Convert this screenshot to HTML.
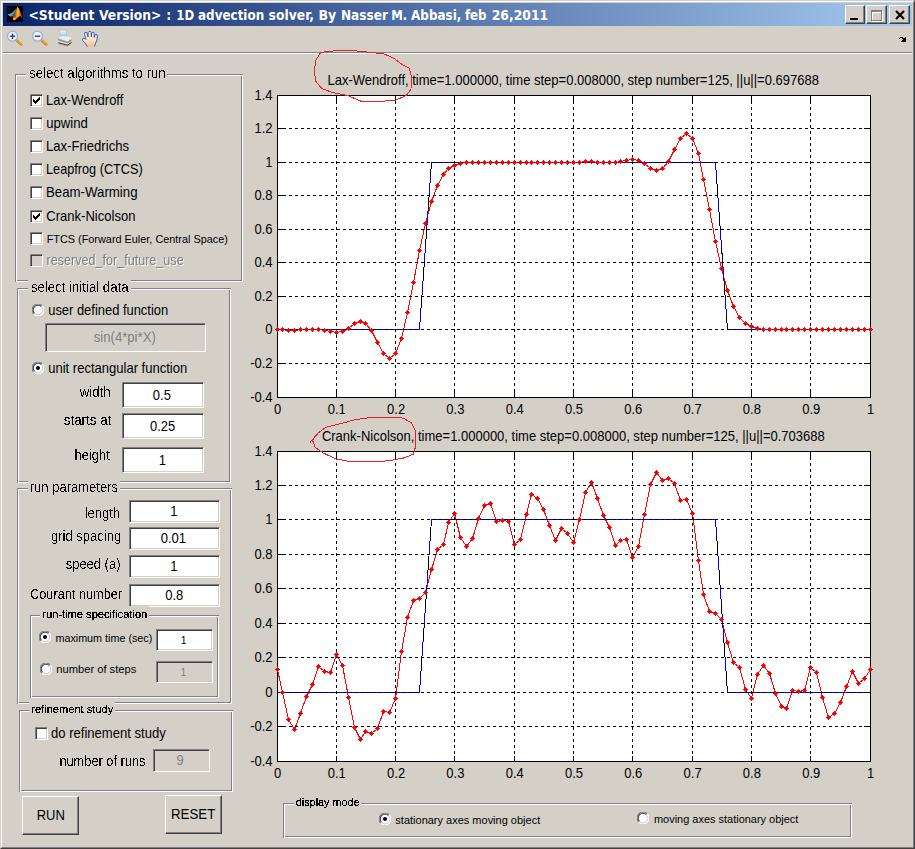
<!DOCTYPE html>
<html><head><meta charset="utf-8"><title>1D advection solver</title>
<style>
html,body{margin:0;padding:0}
body{width:915px;height:849px;background:#d4d0c8;position:relative;overflow:hidden;font-family:'Liberation Sans', sans-serif;}
.a{position:absolute}
.t{position:absolute;white-space:pre;line-height:1;}
.pn{position:absolute;box-sizing:border-box;border:1px solid #808080;border-right:none;border-bottom:none;box-shadow:inset 1px 1px 0 #fff, inset -1px -1px 0 #fff, inset -2px -2px 0 #808080}
.cb{position:absolute;width:13px;height:13px;box-sizing:border-box;background:#fff;border:1px solid;border-color:#808080 #fff #fff #808080;box-shadow:inset 1px 1px 0 #404040, inset -1px -1px 0 #d4d0c8}
.cb.dis{background:#d4d0c8}
.cb svg{position:absolute;left:1px;top:1px}
.ed{position:absolute;box-sizing:border-box;background:#fff;border:1px solid;border-color:#808080 #fff #fff #808080;box-shadow:inset 1px 1px 0 #404040, inset -1px -1px 0 #d4d0c8}
.ed.dis{background:#d4d0c8}
.bt{position:absolute;box-sizing:border-box;background:#d4d0c8;border:1px solid;border-color:#fff #404040 #404040 #fff;box-shadow:inset -1px -1px 0 #808080}
.cbtn{position:absolute;box-sizing:border-box;background:#d4d0c8;border:1px solid;border-color:#fff #404040 #404040 #fff;box-shadow:inset -1px -1px 0 #808080, inset 1px 1px 0 #d4d0c8}
svg .g{stroke:#000;stroke-width:1;stroke-dasharray:3 3}
svg .k{stroke:#000;stroke-width:1}
</style></head>
<body>

<div class="a" style="left:0;top:0;width:915px;height:849px;box-sizing:border-box;border:1px solid;border-color:#d4d0c8 #404040 #404040 #d4d0c8"></div>
<div class="a" style="left:1px;top:1px;width:913px;height:847px;box-sizing:border-box;border:1px solid;border-color:#fff #808080 #808080 #fff"></div>
<div class="a" style="left:3px;top:3px;width:909px;height:23px;background:linear-gradient(90deg,#0a246a 0%,#a6caf0 100%)"></div>
<!-- matlab icon -->
<svg class="a" style="left:7px;top:6px" width="16" height="16" viewBox="0 0 16 16">
<defs>
<linearGradient id="mb" x1="0" y1="0" x2="1" y2="0"><stop offset="0" stop-color="#6a1c08"/><stop offset="0.3" stop-color="#c8501a"/><stop offset="0.5" stop-color="#f9a824"/><stop offset="0.58" stop-color="#ffc62a"/><stop offset="0.75" stop-color="#ea6a1e"/><stop offset="1" stop-color="#a03c18"/></linearGradient>
<linearGradient id="mc" x1="0" y1="0" x2="1" y2="0"><stop offset="0" stop-color="#4cc0e6"/><stop offset="0.6" stop-color="#3aa2c8"/><stop offset="1" stop-color="#1c6e8c"/></linearGradient>
</defs>
<rect width="16" height="16" fill="#000"/>
<path d="M0.5 8.4 L4.8 7.0 L8.3 3.2 L9.8 1.2 L9 5 L7.5 7.5 L5.6 9.8 L3.5 10.8 Z" fill="url(#mc)"/>
<path d="M10.4 0.7 L12 2.8 L13.9 7.5 L15.3 12.2 L13.4 10.2 L11.8 10.4 L9 13.3 L7 14.3 L6 13.4 L5.2 10.6 L7.5 7.5 L9 5 Z" fill="url(#mb)"/>
<path d="M6 12 L8.2 11.5 L9 13.3 L7 14.3 L6 13.4 Z" fill="#ffd030" opacity="0.85"/>
</svg>
<!-- caption buttons -->
<div class="cbtn" style="left:845px;top:5px;width:20px;height:19px"><div class="a" style="left:4px;top:12px;width:8px;height:2px;background:#000"></div></div>
<div class="cbtn" style="left:866px;top:5px;width:21px;height:19px"><div class="a" style="left:5px;top:5px;width:11px;height:11px;box-sizing:border-box;border:1px solid #fff;border-top-width:2px"></div><div class="a" style="left:4px;top:4px;width:11px;height:11px;box-sizing:border-box;border:1px solid #808080;border-top-width:2px"></div></div>
<div class="cbtn" style="left:889px;top:5px;width:21px;height:19px"><svg class="a" style="left:5px;top:4px" width="10" height="10" viewBox="0 0 10 10"><path d="M1 1 L9 9 M9 1 L1 9" stroke="#000" stroke-width="2.1" fill="none"/></svg></div>
<!-- toolbar separator -->
<div class="a" style="left:3px;top:52px;width:909px;height:1px;background:#808080"></div>
<div class="a" style="left:3px;top:53px;width:909px;height:1px;background:#fff"></div>
<!-- toolbar icons -->
<svg class="a" style="left:5px;top:28px" width="100" height="22" viewBox="5 28 100 22">
<defs><linearGradient id="sk" x1="0" y1="0" x2="0" y2="1"><stop offset="0" stop-color="#fff4e4"/><stop offset="0.6" stop-color="#fde0c2"/><stop offset="1" stop-color="#f2be8c"/></linearGradient>
<linearGradient id="pp" x1="0" y1="0" x2="0" y2="1"><stop offset="0" stop-color="#f4faff"/><stop offset="1" stop-color="#9cc8f4"/></linearGradient>
<radialGradient id="ln" cx="0.4" cy="0.4" r="0.7"><stop offset="0" stop-color="#fff"/><stop offset="1" stop-color="#cfe8f8"/></radialGradient></defs>
<g><path d="M16.6 40.2 L21.6 44.6" stroke="#e8a030" stroke-width="2.6" stroke-linecap="round"/><path d="M16.4 41.4 L20.8 45.4" stroke="#b07010" stroke-width="0.7"/>
<circle cx="12.5" cy="36.2" r="5" fill="url(#ln)" stroke="#a4acdf" stroke-width="1.3"/>
<path d="M9.8 36.2 H15.2 M12.5 33.5 V38.9" stroke="#1c2a80" stroke-width="1.3"/></g>
<g><path d="M41.6 40.2 L46.6 44.6" stroke="#e8a030" stroke-width="2.6" stroke-linecap="round"/><path d="M41.4 41.4 L45.8 45.4" stroke="#b07010" stroke-width="0.7"/>
<circle cx="37.5" cy="36.2" r="5" fill="url(#ln)" stroke="#a4acdf" stroke-width="1.3"/>
<path d="M34.8 36.2 H40.2" stroke="#1c2a80" stroke-width="1.3"/></g>
<!-- printer -->
<g><path d="M59.5 30.2 L65.7 30.2 L66.9 35.6 L60.9 36.3 Z" fill="url(#pp)" stroke="#9ab8dc" stroke-width="0.5"/>
<path d="M58.1 37.9 L61.1 35.9 L69.8 36.4 L71.6 38.9 L71.6 42 L67.4 45 L58.1 42.6 Z" fill="#b8b8b8"/>
<path d="M58.1 37.9 L61.1 35.9 L69.8 36.4 L71.6 38.9 L67.6 41.6 Z" fill="#ececec"/>
<path d="M58.1 39.6 L67.6 42.6 L71.6 40.2" fill="none" stroke="#7a7a7a" stroke-width="0.8"/>
<path d="M58.1 41.3 L67.6 44 L71.6 41.6" fill="none" stroke="#f4f4f4" stroke-width="0.8"/>
<path d="M58.3 42.8 L67.4 45.2 L71.6 42.4" fill="none" stroke="#3c3c3c" stroke-width="1.1"/><path d="M59 44 L67.4 46 L71 43.8" fill="none" stroke="#8c8c8c" stroke-width="0.7" opacity="0.7"/>
<rect x="69" y="39.6" width="1" height="1.2" fill="#38b848"/></g>
<!-- hand -->
<g transform="translate(82,31)"><path d="M5.5 15.5 L2.5 11.5 L0.5 9.5 L0.5 8 L1.5 7 L3 7.5 L4 8.5 L2.5 3.5 L2.8 1.8 L4 1.2 L5 2 L6 6 L6.2 1.5 L7 0.5 L8.5 0.5 L9 1.5 L9.3 6 L9.8 2 L10.5 1.2 L11.8 1.5 L12.2 2.5 L12.3 6.5 L13 4 L13.8 3.3 L15 3.8 L15.3 5 L15 9 L13.5 12.5 L12.5 15.5 Z" fill="url(#sk)"/><path d="M5.5 15.5 L2.5 11.5 L0.5 9.5 L0.5 8 L1.5 7 L3 7.5 L4 8.5 L2.5 3.5 L2.8 1.8 L4 1.2 L5 2 L6 6 L6.2 1.5 L7 0.5 L8.5 0.5 L9 1.5 L9.3 6 L9.8 2 L10.5 1.2 L11.8 1.5 L12.2 2.5 L12.3 6.5 L13 4 L13.8 3.3 L15 3.8 L15.3 5 L15 9 L13.5 12.5 L12.5 15.5" fill="none" stroke="#2a4cc4" stroke-width="0.9" stroke-linejoin="round"/></g>
</svg>
<svg class="a" style="left:899px;top:37px" width="7" height="5" viewBox="0 0 7 5" shape-rendering="crispEdges"><path d="M1 0h3v1h-3zM6 0h1v1h-1zM0 1h1v1h-1zM3 1h4v1h-4zM4 2h3v1h-3zM3 3h4v1h-4zM2 4h5v1h-5z" fill="#000"/></svg>

<div class="pn" style="left:15px;top:74px;width:228px;height:208px"></div><div class="pn" style="left:17px;top:288px;width:214px;height:195px"></div><div class="pn" style="left:17px;top:488px;width:215px;height:216px"></div><div class="pn" style="left:30px;top:615px;width:189px;height:83px"></div><div class="pn" style="left:19px;top:710px;width:214px;height:82px"></div><div class="pn" style="left:283px;top:803px;width:569px;height:35px"></div><div class="cb" style="left:30px;top:94px"><svg width="9" height="9" viewBox="0 0 9 9" shape-rendering="crispEdges"><path d="M1 3v3l2 2 5-5V0L3 5z" fill="#000"/></svg></div><div class="cb" style="left:30px;top:117px"></div><div class="cb" style="left:30px;top:140px"></div><div class="cb" style="left:30px;top:163px"></div><div class="cb" style="left:30px;top:186px"></div><div class="cb" style="left:30px;top:210px"><svg width="9" height="9" viewBox="0 0 9 9" shape-rendering="crispEdges"><path d="M1 3v3l2 2 5-5V0L3 5z" fill="#000"/></svg></div><div class="cb" style="left:30px;top:232px"></div><div class="cb dis" style="left:30px;top:254px"></div><svg class="a" style="left:32px;top:304px" width="12" height="12" viewBox="0 0 12 12"><circle cx="6" cy="6" r="5.5" fill="#fff"/><path d="M10.2 1.8A5.9 5.9 0 0 0 1.8 10.2" fill="none" stroke="#808080" stroke-width="1.1"/><path d="M9.4 2.6A4.8 4.8 0 0 0 2.6 9.4" fill="none" stroke="#404040" stroke-width="1.1"/><path d="M1.8 10.2A5.9 5.9 0 0 0 10.2 1.8" fill="none" stroke="#fff" stroke-width="1.1"/><path d="M2.6 9.4A4.8 4.8 0 0 0 9.4 2.6" fill="none" stroke="#d4d0c8" stroke-width="1.1"/></svg><svg class="a" style="left:32px;top:362px" width="12" height="12" viewBox="0 0 12 12"><circle cx="6" cy="6" r="5.5" fill="#fff"/><path d="M10.2 1.8A5.9 5.9 0 0 0 1.8 10.2" fill="none" stroke="#808080" stroke-width="1.1"/><path d="M9.4 2.6A4.8 4.8 0 0 0 2.6 9.4" fill="none" stroke="#404040" stroke-width="1.1"/><path d="M1.8 10.2A5.9 5.9 0 0 0 10.2 1.8" fill="none" stroke="#fff" stroke-width="1.1"/><path d="M2.6 9.4A4.8 4.8 0 0 0 9.4 2.6" fill="none" stroke="#d4d0c8" stroke-width="1.1"/><circle cx="6" cy="6" r="2" fill="#000"/></svg><svg class="a" style="left:39px;top:631px" width="12" height="12" viewBox="0 0 12 12"><circle cx="6" cy="6" r="5.5" fill="#fff"/><path d="M10.2 1.8A5.9 5.9 0 0 0 1.8 10.2" fill="none" stroke="#808080" stroke-width="1.1"/><path d="M9.4 2.6A4.8 4.8 0 0 0 2.6 9.4" fill="none" stroke="#404040" stroke-width="1.1"/><path d="M1.8 10.2A5.9 5.9 0 0 0 10.2 1.8" fill="none" stroke="#fff" stroke-width="1.1"/><path d="M2.6 9.4A4.8 4.8 0 0 0 9.4 2.6" fill="none" stroke="#d4d0c8" stroke-width="1.1"/><circle cx="6" cy="6" r="2" fill="#000"/></svg><svg class="a" style="left:40px;top:663px" width="12" height="12" viewBox="0 0 12 12"><circle cx="6" cy="6" r="5.5" fill="#fff"/><path d="M10.2 1.8A5.9 5.9 0 0 0 1.8 10.2" fill="none" stroke="#808080" stroke-width="1.1"/><path d="M9.4 2.6A4.8 4.8 0 0 0 2.6 9.4" fill="none" stroke="#404040" stroke-width="1.1"/><path d="M1.8 10.2A5.9 5.9 0 0 0 10.2 1.8" fill="none" stroke="#fff" stroke-width="1.1"/><path d="M2.6 9.4A4.8 4.8 0 0 0 9.4 2.6" fill="none" stroke="#d4d0c8" stroke-width="1.1"/></svg><svg class="a" style="left:379px;top:813px" width="12" height="12" viewBox="0 0 12 12"><circle cx="6" cy="6" r="5.5" fill="#fff"/><path d="M10.2 1.8A5.9 5.9 0 0 0 1.8 10.2" fill="none" stroke="#808080" stroke-width="1.1"/><path d="M9.4 2.6A4.8 4.8 0 0 0 2.6 9.4" fill="none" stroke="#404040" stroke-width="1.1"/><path d="M1.8 10.2A5.9 5.9 0 0 0 10.2 1.8" fill="none" stroke="#fff" stroke-width="1.1"/><path d="M2.6 9.4A4.8 4.8 0 0 0 9.4 2.6" fill="none" stroke="#d4d0c8" stroke-width="1.1"/><circle cx="6" cy="6" r="2" fill="#000"/></svg><svg class="a" style="left:637px;top:812px" width="12" height="12" viewBox="0 0 12 12"><circle cx="6" cy="6" r="5.5" fill="#fff"/><path d="M10.2 1.8A5.9 5.9 0 0 0 1.8 10.2" fill="none" stroke="#808080" stroke-width="1.1"/><path d="M9.4 2.6A4.8 4.8 0 0 0 2.6 9.4" fill="none" stroke="#404040" stroke-width="1.1"/><path d="M1.8 10.2A5.9 5.9 0 0 0 10.2 1.8" fill="none" stroke="#fff" stroke-width="1.1"/><path d="M2.6 9.4A4.8 4.8 0 0 0 9.4 2.6" fill="none" stroke="#d4d0c8" stroke-width="1.1"/></svg><div class="ed dis" style="left:45px;top:323px;width:161px;height:29px"></div><div class="ed" style="left:122px;top:382px;width:82px;height:26px"></div><div class="ed" style="left:122px;top:413px;width:82px;height:26px"></div><div class="ed" style="left:122px;top:447px;width:82px;height:26px"></div><div class="ed" style="left:129px;top:500px;width:91px;height:23px"></div><div class="ed" style="left:129px;top:527px;width:91px;height:23px"></div><div class="ed" style="left:129px;top:555px;width:91px;height:23px"></div><div class="ed" style="left:129px;top:584px;width:91px;height:23px"></div><div class="ed" style="left:156px;top:629px;width:57px;height:22px"></div><div class="ed dis" style="left:156px;top:661px;width:57px;height:22px"></div><div class="ed dis" style="left:153px;top:749px;width:57px;height:23px"></div><div class="cb" style="left:35px;top:727px"></div><div class="bt" style="left:22px;top:796px;width:57px;height:39px"></div><div class="bt" style="left:165px;top:795px;width:57px;height:39px"></div>
<svg class="a" style="left:0;top:0" width="915" height="849" viewBox="0 0 915 849" font-family="'Liberation Sans', sans-serif" font-size="13.9" fill="#000">
<g shape-rendering="crispEdges">
<rect x="277" y="95" width="594" height="303" fill="#fff"/>
<polyline points="277.5,329.5 282.5,329.5 288.5,330.5 294.5,330.5 300.5,329.5 306.5,329.5 312.5,329.5 318.5,329.5 324.5,330.5 330.5,331.5 336.5,332.5 342.5,331.5 348.5,328.5 354.5,323.5 360.5,321.5 365.5,323.5 371.5,330.5 377.5,342.5 383.5,353.5 389.5,358.5 395.5,353.5 401.5,338.5 407.5,312.5 413.5,282.5 419.5,250.5 425.5,223.5 431.5,201.5 437.5,185.5 443.5,174.5 448.5,168.5 454.5,165.5 460.5,163.5 466.5,162.5 472.5,162.5 478.5,162.5 484.5,162.5 490.5,162.5 496.5,162.5 502.5,162.5 508.5,162.5 514.5,162.5 520.5,162.5 526.5,162.5 531.5,162.5 537.5,162.5 543.5,162.5 549.5,162.5 555.5,162.5 561.5,162.5 567.5,162.5 573.5,162.5 579.5,162.5 585.5,161.5 591.5,161.5 597.5,162.5 603.5,162.5 609.5,162.5 615.5,162.5 620.5,161.5 626.5,160.5 632.5,159.5 638.5,160.5 644.5,163.5 650.5,168.5 656.5,170.5 662.5,168.5 668.5,161.5 674.5,149.5 680.5,138.5 686.5,133.5 692.5,138.5 698.5,153.5 703.5,179.5 709.5,209.5 715.5,241.5 721.5,268.5 727.5,290.5 733.5,306.5 739.5,317.5 745.5,323.5 751.5,326.5 757.5,328.5 763.5,329.5 769.5,329.5 775.5,329.5 781.5,329.5 786.5,329.5 792.5,329.5 798.5,329.5 804.5,329.5 810.5,329.5 816.5,329.5 822.5,329.5 828.5,329.5 834.5,329.5 840.5,329.5 846.5,329.5 852.5,329.5 858.5,329.5 864.5,329.5 870.5,329.5" fill="none" stroke="#ff0000" stroke-width="1"/>
<polyline points="277.5,329.5 419.5,329.5 425.5,246.5 431.5,162.5 715.5,162.5 721.5,246.5 727.5,329.5 870.5,329.5" fill="none" stroke="#0000ff" stroke-width="1"/>
<polyline points="419.5,329.5 425.5,246.5 431.5,162.5" fill="none" stroke="#000" stroke-width="1" stroke-dasharray="17 17" stroke-dashoffset="-17"/>
<polyline points="715.5,162.5 721.5,246.5 727.5,329.5" fill="none" stroke="#000" stroke-width="1" stroke-dasharray="17 17" stroke-dashoffset="-17"/>
<line x1="336.5" y1="95" x2="336.5" y2="397" class="g"/>
<line x1="336.5" y1="95" x2="336.5" y2="101" class="k"/><line x1="336.5" y1="392" x2="336.5" y2="398" class="k"/>
<line x1="395.5" y1="95" x2="395.5" y2="397" class="g"/>
<line x1="395.5" y1="95" x2="395.5" y2="101" class="k"/><line x1="395.5" y1="392" x2="395.5" y2="398" class="k"/>
<line x1="454.5" y1="95" x2="454.5" y2="397" class="g"/>
<line x1="454.5" y1="95" x2="454.5" y2="101" class="k"/><line x1="454.5" y1="392" x2="454.5" y2="398" class="k"/>
<line x1="514.5" y1="95" x2="514.5" y2="397" class="g"/>
<line x1="514.5" y1="95" x2="514.5" y2="101" class="k"/><line x1="514.5" y1="392" x2="514.5" y2="398" class="k"/>
<line x1="573.5" y1="95" x2="573.5" y2="397" class="g"/>
<line x1="573.5" y1="95" x2="573.5" y2="101" class="k"/><line x1="573.5" y1="392" x2="573.5" y2="398" class="k"/>
<line x1="632.5" y1="95" x2="632.5" y2="397" class="g"/>
<line x1="632.5" y1="95" x2="632.5" y2="101" class="k"/><line x1="632.5" y1="392" x2="632.5" y2="398" class="k"/>
<line x1="692.5" y1="95" x2="692.5" y2="397" class="g"/>
<line x1="692.5" y1="95" x2="692.5" y2="101" class="k"/><line x1="692.5" y1="392" x2="692.5" y2="398" class="k"/>
<line x1="751.5" y1="95" x2="751.5" y2="397" class="g"/>
<line x1="751.5" y1="95" x2="751.5" y2="101" class="k"/><line x1="751.5" y1="392" x2="751.5" y2="398" class="k"/>
<line x1="810.5" y1="95" x2="810.5" y2="397" class="g"/>
<line x1="810.5" y1="95" x2="810.5" y2="101" class="k"/><line x1="810.5" y1="392" x2="810.5" y2="398" class="k"/>
<line x1="277" y1="363.5" x2="870" y2="363.5" class="g"/>
<line x1="277" y1="363.5" x2="284" y2="363.5" class="k"/><line x1="864" y1="363.5" x2="871" y2="363.5" class="k"/>
<line x1="277" y1="329.5" x2="870" y2="329.5" class="g"/>
<line x1="277" y1="329.5" x2="284" y2="329.5" class="k"/><line x1="864" y1="329.5" x2="871" y2="329.5" class="k"/>
<line x1="277" y1="296.5" x2="870" y2="296.5" class="g"/>
<line x1="277" y1="296.5" x2="284" y2="296.5" class="k"/><line x1="864" y1="296.5" x2="871" y2="296.5" class="k"/>
<line x1="277" y1="262.5" x2="870" y2="262.5" class="g"/>
<line x1="277" y1="262.5" x2="284" y2="262.5" class="k"/><line x1="864" y1="262.5" x2="871" y2="262.5" class="k"/>
<line x1="277" y1="229.5" x2="870" y2="229.5" class="g"/>
<line x1="277" y1="229.5" x2="284" y2="229.5" class="k"/><line x1="864" y1="229.5" x2="871" y2="229.5" class="k"/>
<line x1="277" y1="195.5" x2="870" y2="195.5" class="g"/>
<line x1="277" y1="195.5" x2="284" y2="195.5" class="k"/><line x1="864" y1="195.5" x2="871" y2="195.5" class="k"/>
<line x1="277" y1="162.5" x2="870" y2="162.5" class="g"/>
<line x1="277" y1="162.5" x2="284" y2="162.5" class="k"/><line x1="864" y1="162.5" x2="871" y2="162.5" class="k"/>
<line x1="277" y1="128.5" x2="870" y2="128.5" class="g"/>
<line x1="277" y1="128.5" x2="284" y2="128.5" class="k"/><line x1="864" y1="128.5" x2="871" y2="128.5" class="k"/>
<rect x="277.5" y="95.5" width="593" height="302" fill="none" class="k"/>
<path d="M275 329h5v1h-5zM276 328h3v3h-3zM277 327h1v5h-1zM280 329h5v1h-5zM281 328h3v3h-3zM282 327h1v5h-1zM286 330h5v1h-5zM287 329h3v3h-3zM288 328h1v5h-1zM292 330h5v1h-5zM293 329h3v3h-3zM294 328h1v5h-1zM298 329h5v1h-5zM299 328h3v3h-3zM300 327h1v5h-1zM304 329h5v1h-5zM305 328h3v3h-3zM306 327h1v5h-1zM310 329h5v1h-5zM311 328h3v3h-3zM312 327h1v5h-1zM316 329h5v1h-5zM317 328h3v3h-3zM318 327h1v5h-1zM322 330h5v1h-5zM323 329h3v3h-3zM324 328h1v5h-1zM328 331h5v1h-5zM329 330h3v3h-3zM330 329h1v5h-1zM334 332h5v1h-5zM335 331h3v3h-3zM336 330h1v5h-1zM340 331h5v1h-5zM341 330h3v3h-3zM342 329h1v5h-1zM346 328h5v1h-5zM347 327h3v3h-3zM348 326h1v5h-1zM352 323h5v1h-5zM353 322h3v3h-3zM354 321h1v5h-1zM358 321h5v1h-5zM359 320h3v3h-3zM360 319h1v5h-1zM363 323h5v1h-5zM364 322h3v3h-3zM365 321h1v5h-1zM369 330h5v1h-5zM370 329h3v3h-3zM371 328h1v5h-1zM375 342h5v1h-5zM376 341h3v3h-3zM377 340h1v5h-1zM381 353h5v1h-5zM382 352h3v3h-3zM383 351h1v5h-1zM387 358h5v1h-5zM388 357h3v3h-3zM389 356h1v5h-1zM393 353h5v1h-5zM394 352h3v3h-3zM395 351h1v5h-1zM399 338h5v1h-5zM400 337h3v3h-3zM401 336h1v5h-1zM405 312h5v1h-5zM406 311h3v3h-3zM407 310h1v5h-1zM411 282h5v1h-5zM412 281h3v3h-3zM413 280h1v5h-1zM417 250h5v1h-5zM418 249h3v3h-3zM419 248h1v5h-1zM423 223h5v1h-5zM424 222h3v3h-3zM425 221h1v5h-1zM429 201h5v1h-5zM430 200h3v3h-3zM431 199h1v5h-1zM435 185h5v1h-5zM436 184h3v3h-3zM437 183h1v5h-1zM441 174h5v1h-5zM442 173h3v3h-3zM443 172h1v5h-1zM446 168h5v1h-5zM447 167h3v3h-3zM448 166h1v5h-1zM452 165h5v1h-5zM453 164h3v3h-3zM454 163h1v5h-1zM458 163h5v1h-5zM459 162h3v3h-3zM460 161h1v5h-1zM464 162h5v1h-5zM465 161h3v3h-3zM466 160h1v5h-1zM470 162h5v1h-5zM471 161h3v3h-3zM472 160h1v5h-1zM476 162h5v1h-5zM477 161h3v3h-3zM478 160h1v5h-1zM482 162h5v1h-5zM483 161h3v3h-3zM484 160h1v5h-1zM488 162h5v1h-5zM489 161h3v3h-3zM490 160h1v5h-1zM494 162h5v1h-5zM495 161h3v3h-3zM496 160h1v5h-1zM500 162h5v1h-5zM501 161h3v3h-3zM502 160h1v5h-1zM506 162h5v1h-5zM507 161h3v3h-3zM508 160h1v5h-1zM512 162h5v1h-5zM513 161h3v3h-3zM514 160h1v5h-1zM518 162h5v1h-5zM519 161h3v3h-3zM520 160h1v5h-1zM524 162h5v1h-5zM525 161h3v3h-3zM526 160h1v5h-1zM529 162h5v1h-5zM530 161h3v3h-3zM531 160h1v5h-1zM535 162h5v1h-5zM536 161h3v3h-3zM537 160h1v5h-1zM541 162h5v1h-5zM542 161h3v3h-3zM543 160h1v5h-1zM547 162h5v1h-5zM548 161h3v3h-3zM549 160h1v5h-1zM553 162h5v1h-5zM554 161h3v3h-3zM555 160h1v5h-1zM559 162h5v1h-5zM560 161h3v3h-3zM561 160h1v5h-1zM565 162h5v1h-5zM566 161h3v3h-3zM567 160h1v5h-1zM571 162h5v1h-5zM572 161h3v3h-3zM573 160h1v5h-1zM577 162h5v1h-5zM578 161h3v3h-3zM579 160h1v5h-1zM583 161h5v1h-5zM584 160h3v3h-3zM585 159h1v5h-1zM589 161h5v1h-5zM590 160h3v3h-3zM591 159h1v5h-1zM595 162h5v1h-5zM596 161h3v3h-3zM597 160h1v5h-1zM601 162h5v1h-5zM602 161h3v3h-3zM603 160h1v5h-1zM607 162h5v1h-5zM608 161h3v3h-3zM609 160h1v5h-1zM613 162h5v1h-5zM614 161h3v3h-3zM615 160h1v5h-1zM618 161h5v1h-5zM619 160h3v3h-3zM620 159h1v5h-1zM624 160h5v1h-5zM625 159h3v3h-3zM626 158h1v5h-1zM630 159h5v1h-5zM631 158h3v3h-3zM632 157h1v5h-1zM636 160h5v1h-5zM637 159h3v3h-3zM638 158h1v5h-1zM642 163h5v1h-5zM643 162h3v3h-3zM644 161h1v5h-1zM648 168h5v1h-5zM649 167h3v3h-3zM650 166h1v5h-1zM654 170h5v1h-5zM655 169h3v3h-3zM656 168h1v5h-1zM660 168h5v1h-5zM661 167h3v3h-3zM662 166h1v5h-1zM666 161h5v1h-5zM667 160h3v3h-3zM668 159h1v5h-1zM672 149h5v1h-5zM673 148h3v3h-3zM674 147h1v5h-1zM678 138h5v1h-5zM679 137h3v3h-3zM680 136h1v5h-1zM684 133h5v1h-5zM685 132h3v3h-3zM686 131h1v5h-1zM690 138h5v1h-5zM691 137h3v3h-3zM692 136h1v5h-1zM696 153h5v1h-5zM697 152h3v3h-3zM698 151h1v5h-1zM701 179h5v1h-5zM702 178h3v3h-3zM703 177h1v5h-1zM707 209h5v1h-5zM708 208h3v3h-3zM709 207h1v5h-1zM713 241h5v1h-5zM714 240h3v3h-3zM715 239h1v5h-1zM719 268h5v1h-5zM720 267h3v3h-3zM721 266h1v5h-1zM725 290h5v1h-5zM726 289h3v3h-3zM727 288h1v5h-1zM731 306h5v1h-5zM732 305h3v3h-3zM733 304h1v5h-1zM737 317h5v1h-5zM738 316h3v3h-3zM739 315h1v5h-1zM743 323h5v1h-5zM744 322h3v3h-3zM745 321h1v5h-1zM749 326h5v1h-5zM750 325h3v3h-3zM751 324h1v5h-1zM755 328h5v1h-5zM756 327h3v3h-3zM757 326h1v5h-1zM761 329h5v1h-5zM762 328h3v3h-3zM763 327h1v5h-1zM767 329h5v1h-5zM768 328h3v3h-3zM769 327h1v5h-1zM773 329h5v1h-5zM774 328h3v3h-3zM775 327h1v5h-1zM779 329h5v1h-5zM780 328h3v3h-3zM781 327h1v5h-1zM784 329h5v1h-5zM785 328h3v3h-3zM786 327h1v5h-1zM790 329h5v1h-5zM791 328h3v3h-3zM792 327h1v5h-1zM796 329h5v1h-5zM797 328h3v3h-3zM798 327h1v5h-1zM802 329h5v1h-5zM803 328h3v3h-3zM804 327h1v5h-1zM808 329h5v1h-5zM809 328h3v3h-3zM810 327h1v5h-1zM814 329h5v1h-5zM815 328h3v3h-3zM816 327h1v5h-1zM820 329h5v1h-5zM821 328h3v3h-3zM822 327h1v5h-1zM826 329h5v1h-5zM827 328h3v3h-3zM828 327h1v5h-1zM832 329h5v1h-5zM833 328h3v3h-3zM834 327h1v5h-1zM838 329h5v1h-5zM839 328h3v3h-3zM840 327h1v5h-1zM844 329h5v1h-5zM845 328h3v3h-3zM846 327h1v5h-1zM850 329h5v1h-5zM851 328h3v3h-3zM852 327h1v5h-1zM856 329h5v1h-5zM857 328h3v3h-3zM858 327h1v5h-1zM862 329h5v1h-5zM863 328h3v3h-3zM864 327h1v5h-1zM868 329h5v1h-5zM869 328h3v3h-3zM870 327h1v5h-1z" fill="#ff0000"/>
<text x="277.5" y="414" text-anchor="middle" textLength="7.23" lengthAdjust="spacingAndGlyphs">0</text>
<text x="336.8" y="414" text-anchor="middle" textLength="18.07" lengthAdjust="spacingAndGlyphs">0.1</text>
<text x="396.1" y="414" text-anchor="middle" textLength="18.07" lengthAdjust="spacingAndGlyphs">0.2</text>
<text x="455.4" y="414" text-anchor="middle" textLength="18.07" lengthAdjust="spacingAndGlyphs">0.3</text>
<text x="514.7" y="414" text-anchor="middle" textLength="18.07" lengthAdjust="spacingAndGlyphs">0.4</text>
<text x="574.0" y="414" text-anchor="middle" textLength="18.07" lengthAdjust="spacingAndGlyphs">0.5</text>
<text x="633.3" y="414" text-anchor="middle" textLength="18.07" lengthAdjust="spacingAndGlyphs">0.6</text>
<text x="692.6" y="414" text-anchor="middle" textLength="18.07" lengthAdjust="spacingAndGlyphs">0.7</text>
<text x="751.9" y="414" text-anchor="middle" textLength="18.07" lengthAdjust="spacingAndGlyphs">0.8</text>
<text x="811.2" y="414" text-anchor="middle" textLength="18.07" lengthAdjust="spacingAndGlyphs">0.9</text>
<text x="870.5" y="414" text-anchor="middle" textLength="7.23" lengthAdjust="spacingAndGlyphs">1</text>
<text x="272.6" y="402" text-anchor="end" textLength="22.39" lengthAdjust="spacingAndGlyphs">-0.4</text>
<text x="272.6" y="368" text-anchor="end" textLength="22.39" lengthAdjust="spacingAndGlyphs">-0.2</text>
<text x="272.6" y="334" text-anchor="end" textLength="7.23" lengthAdjust="spacingAndGlyphs">0</text>
<text x="272.6" y="301" text-anchor="end" textLength="18.07" lengthAdjust="spacingAndGlyphs">0.2</text>
<text x="272.6" y="267" text-anchor="end" textLength="18.07" lengthAdjust="spacingAndGlyphs">0.4</text>
<text x="272.6" y="234" text-anchor="end" textLength="18.07" lengthAdjust="spacingAndGlyphs">0.6</text>
<text x="272.6" y="200" text-anchor="end" textLength="18.07" lengthAdjust="spacingAndGlyphs">0.8</text>
<text x="272.6" y="167" text-anchor="end" textLength="7.23" lengthAdjust="spacingAndGlyphs">1</text>
<text x="272.6" y="133" text-anchor="end" textLength="18.07" lengthAdjust="spacingAndGlyphs">1.2</text>
<text x="272.6" y="100" text-anchor="end" textLength="18.07" lengthAdjust="spacingAndGlyphs">1.4</text>
<rect x="277" y="451" width="594" height="311" fill="#fff"/>
<polyline points="277.5,669.5 282.5,692.5 288.5,719.5 294.5,729.5 300.5,713.5 306.5,696.5 312.5,684.5 318.5,666.5 324.5,671.5 330.5,672.5 336.5,654.5 342.5,665.5 348.5,697.5 354.5,727.5 360.5,739.5 365.5,731.5 371.5,733.5 377.5,728.5 383.5,711.5 389.5,712.5 395.5,698.5 401.5,651.5 407.5,617.5 413.5,600.5 419.5,598.5 425.5,592.5 431.5,569.5 437.5,549.5 443.5,544.5 448.5,522.5 454.5,513.5 460.5,537.5 466.5,546.5 472.5,538.5 478.5,518.5 484.5,505.5 490.5,503.5 496.5,521.5 502.5,520.5 508.5,521.5 514.5,544.5 520.5,539.5 526.5,514.5 531.5,494.5 537.5,498.5 543.5,509.5 549.5,525.5 555.5,540.5 561.5,528.5 567.5,533.5 573.5,542.5 579.5,519.5 585.5,492.5 591.5,482.5 597.5,498.5 603.5,515.5 609.5,527.5 615.5,545.5 620.5,540.5 626.5,539.5 632.5,557.5 638.5,546.5 644.5,514.5 650.5,484.5 656.5,472.5 662.5,480.5 668.5,478.5 674.5,483.5 680.5,500.5 686.5,499.5 692.5,513.5 698.5,560.5 703.5,594.5 709.5,611.5 715.5,613.5 721.5,619.5 727.5,642.5 733.5,662.5 739.5,667.5 745.5,689.5 751.5,698.5 757.5,674.5 763.5,665.5 769.5,673.5 775.5,693.5 781.5,706.5 786.5,708.5 792.5,690.5 798.5,691.5 804.5,690.5 810.5,667.5 816.5,672.5 822.5,697.5 828.5,717.5 834.5,713.5 840.5,702.5 846.5,686.5 852.5,671.5 858.5,683.5 864.5,678.5 870.5,669.5" fill="none" stroke="#ff0000" stroke-width="1"/>
<polyline points="277.5,692.5 419.5,692.5 425.5,606.5 431.5,519.5 715.5,519.5 721.5,606.5 727.5,692.5 870.5,692.5" fill="none" stroke="#0000ff" stroke-width="1"/>
<polyline points="419.5,692.5 425.5,606.5 431.5,519.5" fill="none" stroke="#000" stroke-width="1" stroke-dasharray="17 17" stroke-dashoffset="-17"/>
<polyline points="715.5,519.5 721.5,606.5 727.5,692.5" fill="none" stroke="#000" stroke-width="1" stroke-dasharray="17 17" stroke-dashoffset="-17"/>
<line x1="336.5" y1="451" x2="336.5" y2="761" class="g"/>
<line x1="336.5" y1="451" x2="336.5" y2="457" class="k"/><line x1="336.5" y1="756" x2="336.5" y2="762" class="k"/>
<line x1="395.5" y1="451" x2="395.5" y2="761" class="g"/>
<line x1="395.5" y1="451" x2="395.5" y2="457" class="k"/><line x1="395.5" y1="756" x2="395.5" y2="762" class="k"/>
<line x1="454.5" y1="451" x2="454.5" y2="761" class="g"/>
<line x1="454.5" y1="451" x2="454.5" y2="457" class="k"/><line x1="454.5" y1="756" x2="454.5" y2="762" class="k"/>
<line x1="514.5" y1="451" x2="514.5" y2="761" class="g"/>
<line x1="514.5" y1="451" x2="514.5" y2="457" class="k"/><line x1="514.5" y1="756" x2="514.5" y2="762" class="k"/>
<line x1="573.5" y1="451" x2="573.5" y2="761" class="g"/>
<line x1="573.5" y1="451" x2="573.5" y2="457" class="k"/><line x1="573.5" y1="756" x2="573.5" y2="762" class="k"/>
<line x1="632.5" y1="451" x2="632.5" y2="761" class="g"/>
<line x1="632.5" y1="451" x2="632.5" y2="457" class="k"/><line x1="632.5" y1="756" x2="632.5" y2="762" class="k"/>
<line x1="692.5" y1="451" x2="692.5" y2="761" class="g"/>
<line x1="692.5" y1="451" x2="692.5" y2="457" class="k"/><line x1="692.5" y1="756" x2="692.5" y2="762" class="k"/>
<line x1="751.5" y1="451" x2="751.5" y2="761" class="g"/>
<line x1="751.5" y1="451" x2="751.5" y2="457" class="k"/><line x1="751.5" y1="756" x2="751.5" y2="762" class="k"/>
<line x1="810.5" y1="451" x2="810.5" y2="761" class="g"/>
<line x1="810.5" y1="451" x2="810.5" y2="457" class="k"/><line x1="810.5" y1="756" x2="810.5" y2="762" class="k"/>
<line x1="277" y1="726.5" x2="870" y2="726.5" class="g"/>
<line x1="277" y1="726.5" x2="284" y2="726.5" class="k"/><line x1="864" y1="726.5" x2="871" y2="726.5" class="k"/>
<line x1="277" y1="692.5" x2="870" y2="692.5" class="g"/>
<line x1="277" y1="692.5" x2="284" y2="692.5" class="k"/><line x1="864" y1="692.5" x2="871" y2="692.5" class="k"/>
<line x1="277" y1="657.5" x2="870" y2="657.5" class="g"/>
<line x1="277" y1="657.5" x2="284" y2="657.5" class="k"/><line x1="864" y1="657.5" x2="871" y2="657.5" class="k"/>
<line x1="277" y1="623.5" x2="870" y2="623.5" class="g"/>
<line x1="277" y1="623.5" x2="284" y2="623.5" class="k"/><line x1="864" y1="623.5" x2="871" y2="623.5" class="k"/>
<line x1="277" y1="588.5" x2="870" y2="588.5" class="g"/>
<line x1="277" y1="588.5" x2="284" y2="588.5" class="k"/><line x1="864" y1="588.5" x2="871" y2="588.5" class="k"/>
<line x1="277" y1="554.5" x2="870" y2="554.5" class="g"/>
<line x1="277" y1="554.5" x2="284" y2="554.5" class="k"/><line x1="864" y1="554.5" x2="871" y2="554.5" class="k"/>
<line x1="277" y1="519.5" x2="870" y2="519.5" class="g"/>
<line x1="277" y1="519.5" x2="284" y2="519.5" class="k"/><line x1="864" y1="519.5" x2="871" y2="519.5" class="k"/>
<line x1="277" y1="485.5" x2="870" y2="485.5" class="g"/>
<line x1="277" y1="485.5" x2="284" y2="485.5" class="k"/><line x1="864" y1="485.5" x2="871" y2="485.5" class="k"/>
<rect x="277.5" y="451.5" width="593" height="310" fill="none" class="k"/>
<path d="M275 669h5v1h-5zM276 668h3v3h-3zM277 667h1v5h-1zM280 692h5v1h-5zM281 691h3v3h-3zM282 690h1v5h-1zM286 719h5v1h-5zM287 718h3v3h-3zM288 717h1v5h-1zM292 729h5v1h-5zM293 728h3v3h-3zM294 727h1v5h-1zM298 713h5v1h-5zM299 712h3v3h-3zM300 711h1v5h-1zM304 696h5v1h-5zM305 695h3v3h-3zM306 694h1v5h-1zM310 684h5v1h-5zM311 683h3v3h-3zM312 682h1v5h-1zM316 666h5v1h-5zM317 665h3v3h-3zM318 664h1v5h-1zM322 671h5v1h-5zM323 670h3v3h-3zM324 669h1v5h-1zM328 672h5v1h-5zM329 671h3v3h-3zM330 670h1v5h-1zM334 654h5v1h-5zM335 653h3v3h-3zM336 652h1v5h-1zM340 665h5v1h-5zM341 664h3v3h-3zM342 663h1v5h-1zM346 697h5v1h-5zM347 696h3v3h-3zM348 695h1v5h-1zM352 727h5v1h-5zM353 726h3v3h-3zM354 725h1v5h-1zM358 739h5v1h-5zM359 738h3v3h-3zM360 737h1v5h-1zM363 731h5v1h-5zM364 730h3v3h-3zM365 729h1v5h-1zM369 733h5v1h-5zM370 732h3v3h-3zM371 731h1v5h-1zM375 728h5v1h-5zM376 727h3v3h-3zM377 726h1v5h-1zM381 711h5v1h-5zM382 710h3v3h-3zM383 709h1v5h-1zM387 712h5v1h-5zM388 711h3v3h-3zM389 710h1v5h-1zM393 698h5v1h-5zM394 697h3v3h-3zM395 696h1v5h-1zM399 651h5v1h-5zM400 650h3v3h-3zM401 649h1v5h-1zM405 617h5v1h-5zM406 616h3v3h-3zM407 615h1v5h-1zM411 600h5v1h-5zM412 599h3v3h-3zM413 598h1v5h-1zM417 598h5v1h-5zM418 597h3v3h-3zM419 596h1v5h-1zM423 592h5v1h-5zM424 591h3v3h-3zM425 590h1v5h-1zM429 569h5v1h-5zM430 568h3v3h-3zM431 567h1v5h-1zM435 549h5v1h-5zM436 548h3v3h-3zM437 547h1v5h-1zM441 544h5v1h-5zM442 543h3v3h-3zM443 542h1v5h-1zM446 522h5v1h-5zM447 521h3v3h-3zM448 520h1v5h-1zM452 513h5v1h-5zM453 512h3v3h-3zM454 511h1v5h-1zM458 537h5v1h-5zM459 536h3v3h-3zM460 535h1v5h-1zM464 546h5v1h-5zM465 545h3v3h-3zM466 544h1v5h-1zM470 538h5v1h-5zM471 537h3v3h-3zM472 536h1v5h-1zM476 518h5v1h-5zM477 517h3v3h-3zM478 516h1v5h-1zM482 505h5v1h-5zM483 504h3v3h-3zM484 503h1v5h-1zM488 503h5v1h-5zM489 502h3v3h-3zM490 501h1v5h-1zM494 521h5v1h-5zM495 520h3v3h-3zM496 519h1v5h-1zM500 520h5v1h-5zM501 519h3v3h-3zM502 518h1v5h-1zM506 521h5v1h-5zM507 520h3v3h-3zM508 519h1v5h-1zM512 544h5v1h-5zM513 543h3v3h-3zM514 542h1v5h-1zM518 539h5v1h-5zM519 538h3v3h-3zM520 537h1v5h-1zM524 514h5v1h-5zM525 513h3v3h-3zM526 512h1v5h-1zM529 494h5v1h-5zM530 493h3v3h-3zM531 492h1v5h-1zM535 498h5v1h-5zM536 497h3v3h-3zM537 496h1v5h-1zM541 509h5v1h-5zM542 508h3v3h-3zM543 507h1v5h-1zM547 525h5v1h-5zM548 524h3v3h-3zM549 523h1v5h-1zM553 540h5v1h-5zM554 539h3v3h-3zM555 538h1v5h-1zM559 528h5v1h-5zM560 527h3v3h-3zM561 526h1v5h-1zM565 533h5v1h-5zM566 532h3v3h-3zM567 531h1v5h-1zM571 542h5v1h-5zM572 541h3v3h-3zM573 540h1v5h-1zM577 519h5v1h-5zM578 518h3v3h-3zM579 517h1v5h-1zM583 492h5v1h-5zM584 491h3v3h-3zM585 490h1v5h-1zM589 482h5v1h-5zM590 481h3v3h-3zM591 480h1v5h-1zM595 498h5v1h-5zM596 497h3v3h-3zM597 496h1v5h-1zM601 515h5v1h-5zM602 514h3v3h-3zM603 513h1v5h-1zM607 527h5v1h-5zM608 526h3v3h-3zM609 525h1v5h-1zM613 545h5v1h-5zM614 544h3v3h-3zM615 543h1v5h-1zM618 540h5v1h-5zM619 539h3v3h-3zM620 538h1v5h-1zM624 539h5v1h-5zM625 538h3v3h-3zM626 537h1v5h-1zM630 557h5v1h-5zM631 556h3v3h-3zM632 555h1v5h-1zM636 546h5v1h-5zM637 545h3v3h-3zM638 544h1v5h-1zM642 514h5v1h-5zM643 513h3v3h-3zM644 512h1v5h-1zM648 484h5v1h-5zM649 483h3v3h-3zM650 482h1v5h-1zM654 472h5v1h-5zM655 471h3v3h-3zM656 470h1v5h-1zM660 480h5v1h-5zM661 479h3v3h-3zM662 478h1v5h-1zM666 478h5v1h-5zM667 477h3v3h-3zM668 476h1v5h-1zM672 483h5v1h-5zM673 482h3v3h-3zM674 481h1v5h-1zM678 500h5v1h-5zM679 499h3v3h-3zM680 498h1v5h-1zM684 499h5v1h-5zM685 498h3v3h-3zM686 497h1v5h-1zM690 513h5v1h-5zM691 512h3v3h-3zM692 511h1v5h-1zM696 560h5v1h-5zM697 559h3v3h-3zM698 558h1v5h-1zM701 594h5v1h-5zM702 593h3v3h-3zM703 592h1v5h-1zM707 611h5v1h-5zM708 610h3v3h-3zM709 609h1v5h-1zM713 613h5v1h-5zM714 612h3v3h-3zM715 611h1v5h-1zM719 619h5v1h-5zM720 618h3v3h-3zM721 617h1v5h-1zM725 642h5v1h-5zM726 641h3v3h-3zM727 640h1v5h-1zM731 662h5v1h-5zM732 661h3v3h-3zM733 660h1v5h-1zM737 667h5v1h-5zM738 666h3v3h-3zM739 665h1v5h-1zM743 689h5v1h-5zM744 688h3v3h-3zM745 687h1v5h-1zM749 698h5v1h-5zM750 697h3v3h-3zM751 696h1v5h-1zM755 674h5v1h-5zM756 673h3v3h-3zM757 672h1v5h-1zM761 665h5v1h-5zM762 664h3v3h-3zM763 663h1v5h-1zM767 673h5v1h-5zM768 672h3v3h-3zM769 671h1v5h-1zM773 693h5v1h-5zM774 692h3v3h-3zM775 691h1v5h-1zM779 706h5v1h-5zM780 705h3v3h-3zM781 704h1v5h-1zM784 708h5v1h-5zM785 707h3v3h-3zM786 706h1v5h-1zM790 690h5v1h-5zM791 689h3v3h-3zM792 688h1v5h-1zM796 691h5v1h-5zM797 690h3v3h-3zM798 689h1v5h-1zM802 690h5v1h-5zM803 689h3v3h-3zM804 688h1v5h-1zM808 667h5v1h-5zM809 666h3v3h-3zM810 665h1v5h-1zM814 672h5v1h-5zM815 671h3v3h-3zM816 670h1v5h-1zM820 697h5v1h-5zM821 696h3v3h-3zM822 695h1v5h-1zM826 717h5v1h-5zM827 716h3v3h-3zM828 715h1v5h-1zM832 713h5v1h-5zM833 712h3v3h-3zM834 711h1v5h-1zM838 702h5v1h-5zM839 701h3v3h-3zM840 700h1v5h-1zM844 686h5v1h-5zM845 685h3v3h-3zM846 684h1v5h-1zM850 671h5v1h-5zM851 670h3v3h-3zM852 669h1v5h-1zM856 683h5v1h-5zM857 682h3v3h-3zM858 681h1v5h-1zM862 678h5v1h-5zM863 677h3v3h-3zM864 676h1v5h-1zM868 669h5v1h-5zM869 668h3v3h-3zM870 667h1v5h-1z" fill="#ff0000"/>
<text x="277.5" y="778" text-anchor="middle" textLength="7.23" lengthAdjust="spacingAndGlyphs">0</text>
<text x="336.8" y="778" text-anchor="middle" textLength="18.07" lengthAdjust="spacingAndGlyphs">0.1</text>
<text x="396.1" y="778" text-anchor="middle" textLength="18.07" lengthAdjust="spacingAndGlyphs">0.2</text>
<text x="455.4" y="778" text-anchor="middle" textLength="18.07" lengthAdjust="spacingAndGlyphs">0.3</text>
<text x="514.7" y="778" text-anchor="middle" textLength="18.07" lengthAdjust="spacingAndGlyphs">0.4</text>
<text x="574.0" y="778" text-anchor="middle" textLength="18.07" lengthAdjust="spacingAndGlyphs">0.5</text>
<text x="633.3" y="778" text-anchor="middle" textLength="18.07" lengthAdjust="spacingAndGlyphs">0.6</text>
<text x="692.6" y="778" text-anchor="middle" textLength="18.07" lengthAdjust="spacingAndGlyphs">0.7</text>
<text x="751.9" y="778" text-anchor="middle" textLength="18.07" lengthAdjust="spacingAndGlyphs">0.8</text>
<text x="811.2" y="778" text-anchor="middle" textLength="18.07" lengthAdjust="spacingAndGlyphs">0.9</text>
<text x="870.5" y="778" text-anchor="middle" textLength="7.23" lengthAdjust="spacingAndGlyphs">1</text>
<text x="272.6" y="766" text-anchor="end" textLength="22.39" lengthAdjust="spacingAndGlyphs">-0.4</text>
<text x="272.6" y="731" text-anchor="end" textLength="22.39" lengthAdjust="spacingAndGlyphs">-0.2</text>
<text x="272.6" y="697" text-anchor="end" textLength="7.23" lengthAdjust="spacingAndGlyphs">0</text>
<text x="272.6" y="662" text-anchor="end" textLength="18.07" lengthAdjust="spacingAndGlyphs">0.2</text>
<text x="272.6" y="628" text-anchor="end" textLength="18.07" lengthAdjust="spacingAndGlyphs">0.4</text>
<text x="272.6" y="593" text-anchor="end" textLength="18.07" lengthAdjust="spacingAndGlyphs">0.6</text>
<text x="272.6" y="559" text-anchor="end" textLength="18.07" lengthAdjust="spacingAndGlyphs">0.8</text>
<text x="272.6" y="524" text-anchor="end" textLength="7.23" lengthAdjust="spacingAndGlyphs">1</text>
<text x="272.6" y="490" text-anchor="end" textLength="18.07" lengthAdjust="spacingAndGlyphs">1.2</text>
<text x="272.6" y="456" text-anchor="end" textLength="18.07" lengthAdjust="spacingAndGlyphs">1.4</text>
</g>
<path d="M320.7 52.5 L331.2 51.1 L349.6 50.2 L368 52.1 L383.7 53.8 L394.2 58.4 L402 64.3 L409.3 68.2 L411.9 78 L411.5 88.5 L406 95.7 L395.5 100.1 L378.4 101.6 L361.4 101.4 L348.3 95.7 L332.5 92.5 L322 88.5 L316.1 82 L314.2 71.5 L316.1 59.7 Z" fill="none" stroke="#ee1c24" stroke-width="1" stroke-linejoin="round" shape-rendering="crispEdges"/>
<path d="M309.9 442.5 L312.9 439 L318.3 432.9 L326 427.2 L340.5 423.7 L354.3 419.9 L369.6 417.6 L387.9 417.1 L403.2 418.1 L411.6 422.9 L415.2 430.6 L415.8 445.9 L413.2 454.3 L403.2 458.1 L387.9 460.9 L369.6 461.7 L351.2 461.7 L335.9 458.9 L322.9 452.8 L315.2 447.4 L312.9 441.3 L313.2 438.5" fill="none" stroke="#ee1c24" stroke-width="1" stroke-linejoin="round" shape-rendering="crispEdges"/>
</svg>
<svg class="a" style="left:0;top:0" width="915" height="849" viewBox="0 0 915 849" font-family="'Liberation Sans', sans-serif" xml:space="preserve">
<defs><filter id="emb" x="-2%" y="-20%" width="104%" height="150%" color-interpolation-filters="sRGB"><feOffset in="SourceAlpha" dx="1" dy="1" result="o"/><feFlood flood-color="#fff"/><feComposite in2="o" operator="in" result="w"/><feMerge><feMergeNode in="w"/><feMergeNode in="SourceGraphic"/></feMerge></filter><filter id="crisp" x="-5%" y="-20%" width="110%" height="140%" color-interpolation-filters="sRGB"><feComponentTransfer><feFuncA type="discrete" tableValues="0 0 0 1 1 1"/></feComponentTransfer></filter><filter id="crisp8" x="-5%" y="-20%" width="110%" height="140%" color-interpolation-filters="sRGB"><feComponentTransfer><feFuncA type="discrete" tableValues="0 1 1"/></feComponentTransfer></filter></defs>
<rect x="26" y="66" width="141" height="16" fill="#d4d0c8"/>
<text x="29.17" y="78.00" font-size="13.9" textLength="136.57" lengthAdjust="spacingAndGlyphs" filter="url(#crisp)" fill="#000">select algorithms to run</text>
<text x="45.97" y="105.00" font-size="13.9" textLength="77.36" lengthAdjust="spacingAndGlyphs" fill="#000">Lax-Wendroff</text>
<text x="46.15" y="128.00" font-size="13.9" textLength="41.71" lengthAdjust="spacingAndGlyphs" fill="#000">upwind</text>
<text x="45.96" y="151.00" font-size="13.9" textLength="83.11" lengthAdjust="spacingAndGlyphs" fill="#000">Lax-Friedrichs</text>
<text x="46.03" y="174.00" font-size="13.9" textLength="96.65" lengthAdjust="spacingAndGlyphs" fill="#000">Leapfrog (CTCS)</text>
<text x="45.94" y="197.00" font-size="13.9" textLength="91.60" lengthAdjust="spacingAndGlyphs" fill="#000">Beam-Warming</text>
<text x="46.32" y="221.00" font-size="13.9" textLength="89.12" lengthAdjust="spacingAndGlyphs" fill="#000">Crank-Nicolson</text>
<text x="46.63" y="243.00" font-size="11.1" textLength="181.33" lengthAdjust="spacingAndGlyphs" fill="#000">FTCS (Forward Euler, Central Space)</text>
<text x="46.49" y="265.00" font-size="13.9" textLength="137.18" lengthAdjust="spacingAndGlyphs" filter="url(#emb)" fill="#808080">reserved_for_future_use</text>
<rect x="28" y="280" width="103" height="16" fill="#d4d0c8"/>
<text x="30.91" y="292.00" font-size="13.9" textLength="97.68" lengthAdjust="spacingAndGlyphs" filter="url(#crisp)" fill="#000">select initial data</text>
<text x="48.21" y="315.00" font-size="13.9" textLength="119.97" lengthAdjust="spacingAndGlyphs" fill="#000">user defined function</text>
<text x="93.70" y="342.00" font-size="13.9" textLength="62.12" lengthAdjust="spacingAndGlyphs" fill="#808080">sin(4*pi*X)</text>
<text x="48.21" y="373.00" font-size="13.9" textLength="139.03" lengthAdjust="spacingAndGlyphs" fill="#000">unit rectangular function</text>
<text x="79.83" y="397.00" font-size="13.9" textLength="30.69" lengthAdjust="spacingAndGlyphs" filter="url(#crisp)" fill="#000">width</text>
<text x="63.72" y="425.00" font-size="13.9" textLength="47.62" lengthAdjust="spacingAndGlyphs" filter="url(#crisp)" fill="#000">starts at</text>
<text x="74.59" y="460.00" font-size="13.9" textLength="35.22" lengthAdjust="spacingAndGlyphs" filter="url(#crisp)" fill="#000">height</text>
<text x="152.87" y="400.00" font-size="13.9" textLength="18.07" lengthAdjust="spacingAndGlyphs" fill="#000">0.5</text>
<text x="150.06" y="431.00" font-size="13.9" textLength="25.18" lengthAdjust="spacingAndGlyphs" fill="#000">0.25</text>
<text x="158.66" y="465.00" font-size="13.9" textLength="7.23" lengthAdjust="spacingAndGlyphs" fill="#000">1</text>
<rect x="28" y="480" width="92" height="16" fill="#d4d0c8"/>
<text x="29.77" y="492.00" font-size="13.9" textLength="88.28" lengthAdjust="spacingAndGlyphs" filter="url(#crisp)" fill="#000">run parameters</text>
<text x="84.72" y="518.00" font-size="13.9" textLength="35.52" lengthAdjust="spacingAndGlyphs" filter="url(#crisp)" fill="#000">length</text>
<text x="50.97" y="541.00" font-size="13.9" textLength="70.26" lengthAdjust="spacingAndGlyphs" filter="url(#crisp)" fill="#000">grid spacing</text>
<text x="65.73" y="569.00" font-size="13.9" textLength="54.73" lengthAdjust="spacingAndGlyphs" filter="url(#crisp)" fill="#000">speed (a)</text>
<text x="30.07" y="599.00" font-size="13.9" textLength="92.04" lengthAdjust="spacingAndGlyphs" filter="url(#crisp)" fill="#000">Courant number</text>
<text x="170.16" y="516.00" font-size="13.9" textLength="7.23" lengthAdjust="spacingAndGlyphs" fill="#000">1</text>
<text x="160.76" y="543.00" font-size="13.9" textLength="25.38" lengthAdjust="spacingAndGlyphs" fill="#000">0.01</text>
<text x="170.16" y="571.00" font-size="13.9" textLength="7.23" lengthAdjust="spacingAndGlyphs" fill="#000">1</text>
<text x="165.23" y="600.00" font-size="13.9" textLength="18.07" lengthAdjust="spacingAndGlyphs" fill="#000">0.8</text>
<rect x="40" y="606" width="109" height="16" fill="#d4d0c8"/>
<text x="42.27" y="618.00" font-size="11.1" textLength="104.99" lengthAdjust="spacingAndGlyphs" filter="url(#crisp8)" fill="#000">run-time specification</text>
<text x="55.44" y="642.00" font-size="11.1" textLength="96.86" lengthAdjust="spacingAndGlyphs" fill="#000">maximum time (sec)</text>
<text x="180.83" y="644.00" font-size="11.1" textLength="5.77" lengthAdjust="spacingAndGlyphs" fill="#000">1</text>
<text x="56.29" y="673.00" font-size="11.1" textLength="80.01" lengthAdjust="spacingAndGlyphs" fill="#000">number of steps</text>
<text x="180.41" y="676.00" font-size="11.1" textLength="5.77" lengthAdjust="spacingAndGlyphs" fill="#808080">1</text>
<rect x="29" y="701" width="86" height="16" fill="#d4d0c8"/>
<text x="31.27" y="713.00" font-size="11.1" textLength="82.04" lengthAdjust="spacingAndGlyphs" filter="url(#crisp8)" fill="#000">refinement study</text>
<text x="51.04" y="738.00" font-size="13.9" textLength="114.65" lengthAdjust="spacingAndGlyphs" fill="#000">do refinement study</text>
<text x="59.39" y="766.00" font-size="13.9" textLength="86.10" lengthAdjust="spacingAndGlyphs" filter="url(#crisp)" fill="#000">number of runs</text>
<text x="176.42" y="765.00" font-size="13.9" textLength="7.23" lengthAdjust="spacingAndGlyphs" fill="#808080">9</text>
<text x="36.65" y="820.00" font-size="13.9" textLength="28.16" lengthAdjust="spacingAndGlyphs" fill="#000">RUN</text>
<text x="170.97" y="819.00" font-size="13.9" textLength="44.35" lengthAdjust="spacingAndGlyphs" fill="#000">RESET</text>
<rect x="294" y="794" width="67" height="16" fill="#d4d0c8"/>
<text x="295.72" y="806.00" font-size="11.1" textLength="63.96" lengthAdjust="spacingAndGlyphs" filter="url(#crisp8)" fill="#000">display mode</text>
<text x="395.37" y="824.00" font-size="11.1" textLength="144.84" lengthAdjust="spacingAndGlyphs" fill="#000">stationary axes moving object</text>
<text x="653.93" y="823.00" font-size="11.1" textLength="144.48" lengthAdjust="spacingAndGlyphs" fill="#000">moving axes stationary object</text>
<text x="327.43" y="85.00" font-size="13.9" textLength="491.51" lengthAdjust="spacingAndGlyphs" fill="#000">Lax-Wendroff, time=1.000000, time step=0.008000, step number=125, ||u||=0.697688</text>
<text x="321.89" y="441.00" font-size="13.9" textLength="502.85" lengthAdjust="spacingAndGlyphs" fill="#000">Crank-Nicolson, time=1.000000, time step=0.008000, step number=125, ||u||=0.703688</text>
<text y="19.6" font-size="13.6" font-weight="bold" font-family="'DejaVu Sans Condensed', 'DejaVu Sans', sans-serif" fill="#fff"><tspan x="28.50" textLength="66.00" lengthAdjust="spacingAndGlyphs">&lt;Student</tspan> <tspan x="99.00" textLength="62.40" lengthAdjust="spacingAndGlyphs">Version&gt;</tspan> <tspan x="166.17" textLength="4.97" lengthAdjust="spacingAndGlyphs">:</tspan> <tspan x="176.30" textLength="17.90" lengthAdjust="spacingAndGlyphs">1D</tspan> <tspan x="198.00" textLength="66.20" lengthAdjust="spacingAndGlyphs">advection</tspan> <tspan x="268.60" textLength="45.40" lengthAdjust="spacingAndGlyphs">solver,</tspan> <tspan x="318.50" textLength="17.80" lengthAdjust="spacingAndGlyphs">By</tspan> <tspan x="340.90" textLength="47.00" lengthAdjust="spacingAndGlyphs">Nasser</tspan> <tspan x="391.30" textLength="16.00" lengthAdjust="spacingAndGlyphs">M.</tspan> <tspan x="411.10" textLength="50.30" lengthAdjust="spacingAndGlyphs">Abbasi,</tspan> <tspan x="464.90" textLength="21.70" lengthAdjust="spacingAndGlyphs">feb</tspan> <tspan x="491.70" textLength="56.50" lengthAdjust="spacingAndGlyphs">26,2011</tspan></text>
</svg>
</body></html>
